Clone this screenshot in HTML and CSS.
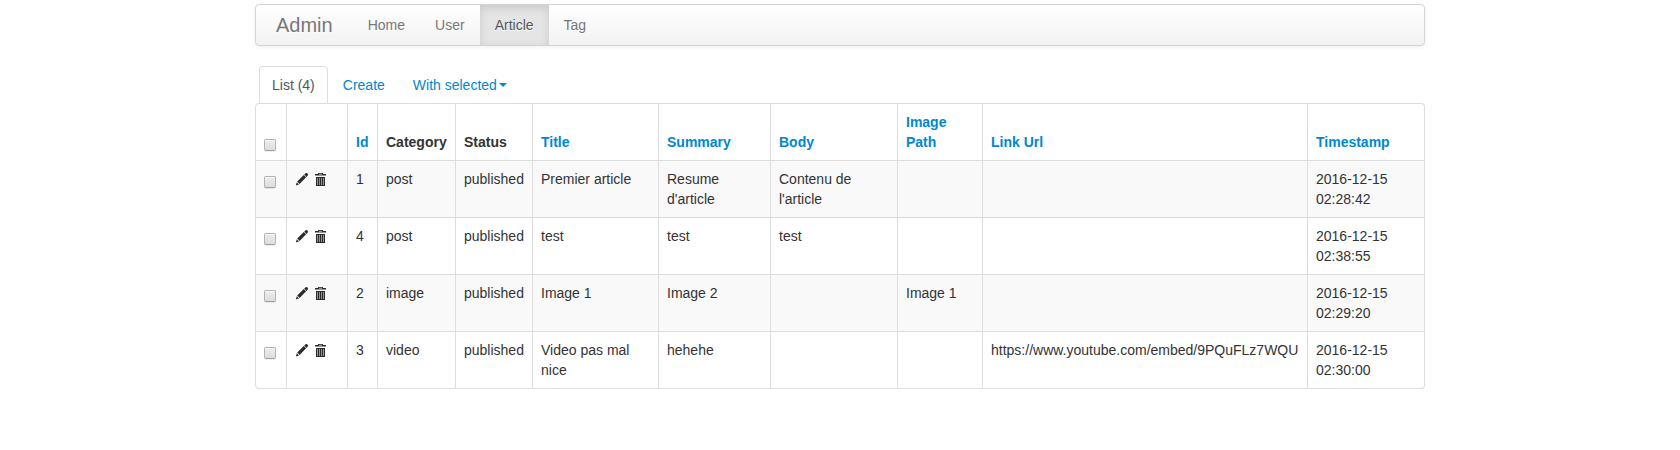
FILE: index.html
```html
<!DOCTYPE html>
<html lang="en">
<head>
<meta charset="utf-8">
<title>Article - Admin</title>
<link rel="stylesheet" href="styles.css">
</head>
<body>
<svg class="defs" width="0" height="0">
  <symbol id="pencil" viewBox="0 0 14 14">
    <path d="M0.8 13.5 L1.8 10.2 L4 12.5 Z M2.2 9.5 L8.8 3 L11.1 5.3 L4.6 11.9 Z M9.2 2.6 L10.7 1.3 Q11.5 .7 12.2 1.3 L12.8 1.9 Q13.4 2.6 12.8 3.4 L11.5 4.9 Z"/>
  </symbol>
  <symbol id="trash" viewBox="0 0 14 14">
    <path d="M5 1h5v1h3v1.4H2V2h3z M3 5h9v1H3z M3 6h1v7H3z M5 6h1v7H5z M7 6h1v7H7z M9 6h1v7H9z M11 6h1v7h-1z M3 13h9v1H3z"/>
    <path d="M4 6h7v7H4z" opacity=".5"/>
    <path class="trash-handle" d="M6 1.8h3v.7H6z"/>
  </symbol>
</svg>
<div class="container">
  <nav class="navbar">
    <a class="brand">Admin</a>
    <a class="nav-link">Home</a>
    <a class="nav-link">User</a>
    <a class="nav-link active">Article</a>
    <a class="nav-link">Tag</a>
  </nav>
  <div class="tabs">
    <a class="tab active">List (4)</a>
    <a class="tab">Create</a>
    <a class="tab">With selected<b class="caret"></b></a>
  </div>
  <table class="model-list">
    <colgroup><col class="c-check"><col class="c-tools"><col class="c-id"><col class="c-category"><col class="c-status"><col class="c-title"><col class="c-summary"><col class="c-body"><col class="c-image"><col class="c-link"><col class="c-time"></colgroup>
    <thead>
      <tr><th><input type="checkbox"></th><th></th><th><a>Id</a></th><th>Category</th><th>Status</th><th><a>Title</a></th><th><a>Summary</a></th><th><a>Body</a></th><th><a>Image Path</a></th><th><a>Link Url</a></th><th><a>Timestamp</a></th></tr>
    </thead>
    <tbody>
      <tr><td><input type="checkbox"></td><td><span class="tools"><svg><use href="#pencil"/></svg><svg><use href="#trash"/></svg></span></td><td>1</td><td>post</td><td>published</td><td>Premier article</td><td>Resume d'article</td><td>Contenu de l'article</td><td></td><td></td><td>2016-12-15 02:28:42</td></tr>
      <tr><td><input type="checkbox"></td><td><span class="tools"><svg><use href="#pencil"/></svg><svg><use href="#trash"/></svg></span></td><td>4</td><td>post</td><td>published</td><td>test</td><td>test</td><td>test</td><td></td><td></td><td>2016-12-15 02:38:55</td></tr>
      <tr><td><input type="checkbox"></td><td><span class="tools"><svg><use href="#pencil"/></svg><svg><use href="#trash"/></svg></span></td><td>2</td><td>image</td><td>published</td><td>Image 1</td><td>Image 2</td><td></td><td>Image 1</td><td></td><td>2016-12-15 02:29:20</td></tr>
      <tr><td><input type="checkbox"></td><td><span class="tools"><svg><use href="#pencil"/></svg><svg><use href="#trash"/></svg></span></td><td>3</td><td>video</td><td>published</td><td>Video pas mal nice</td><td>hehehe</td><td></td><td></td><td>https://www.youtube.com/embed/9PQuFLz7WQU</td><td>2016-12-15 02:30:00</td></tr>
    </tbody>
  </table>
</div>
</body>
</html>
```
FILE: styles.css
```css
body {
  margin: 0;
  background: #fff;
  color: #333;
  font: 14px/20px "Liberation Sans", Arial, sans-serif;
}
.defs { display: none; }
.container {
  width: 1170px;
  margin: 0 auto;
  padding-top: 4px;
}
.navbar {
  display: flex;
  box-sizing: border-box;
  height: 42px;
  margin-bottom: 20px;
  border: 1px solid #d4d4d4;
  border-radius: 4px;
  background: linear-gradient(#fff, #f2f2f2);
  box-shadow: 0 1px 4px rgba(0, 0, 0, .065);
}
.brand {
  padding: 10px 20px;
  color: #777;
  font-size: 20px;
  text-shadow: 0 1px 0 #fff;
}
.nav-link {
  padding: 10px 15px;
  color: #777;
  text-shadow: 0 1px 0 #fff;
}
.nav-link.active {
  background: #e5e5e5;
  color: #555;
  box-shadow: inset 0 3px 8px rgba(0, 0, 0, .125);
}
.tabs {
  display: flex;
  gap: 2px;
  padding-left: 4px;
}
.tab {
  padding: 8px 12px;
  border: 1px solid transparent;
  border-bottom: 0;
  border-radius: 4px 4px 0 0;
  color: #08c;
}
.tab.active {
  border-color: #ddd;
  color: #555;
}
.caret {
  display: inline-block;
  margin: 8px 0 0 2px;
  vertical-align: top;
  border-top: 4px solid #08c;
  border-right: 4px solid transparent;
  border-left: 4px solid transparent;
}
.model-list {
  width: 1170px;
  table-layout: fixed;
  border: 1px solid #ddd;
  border-left: 0;
  border-radius: 4px;
  border-collapse: separate;
  border-spacing: 0;
}
.model-list th,
.model-list td {
  box-sizing: border-box;
  height: 57px;
  padding: 8px;
  border-left: 1px solid #ddd;
  border-top: 1px solid #ddd;
  text-align: left;
  vertical-align: top;
}
.model-list th {
  height: 56px;
  border-top: 0;
  vertical-align: bottom;
}
.model-list th:first-child { border-top-left-radius: 4px; }
.model-list tbody tr:last-child td:first-child { border-bottom-left-radius: 4px; }
.model-list a { color: #08c; }
tbody tr:nth-child(odd) td { background: #f9f9f9; }
.c-check { width: 31px; }
.c-tools { width: 61px; }
.c-id { width: 30px; }
.c-category { width: 78px; }
.c-status { width: 77px; }
.c-title { width: 126px; }
.c-summary { width: 112px; }
.c-body { width: 127px; }
.c-image { width: 85px; }
.c-link { width: 325px; }
input {
  display: block;
  box-sizing: border-box;
  appearance: none;
  width: 12px;
  height: 12px;
  margin: 7px 0 1px;
  border: 1px solid #b2b2b2;
  border-bottom-color: #a0a0a0;
  border-radius: 2px;
  background: linear-gradient(#ededed, #dcdcdc);
  box-shadow: 0 1px 1px rgba(0, 0, 0, .08), inset 0 1px 1px rgba(255, 255, 255, .8);
}
.tools {
  display: flex;
  gap: 4px;
  padding-top: 3px;
}
.tools svg {
  width: 14px;
  height: 14px;
  fill: #2b2b2b;
}
.trash-handle { fill: #f9f9f9; }
```
